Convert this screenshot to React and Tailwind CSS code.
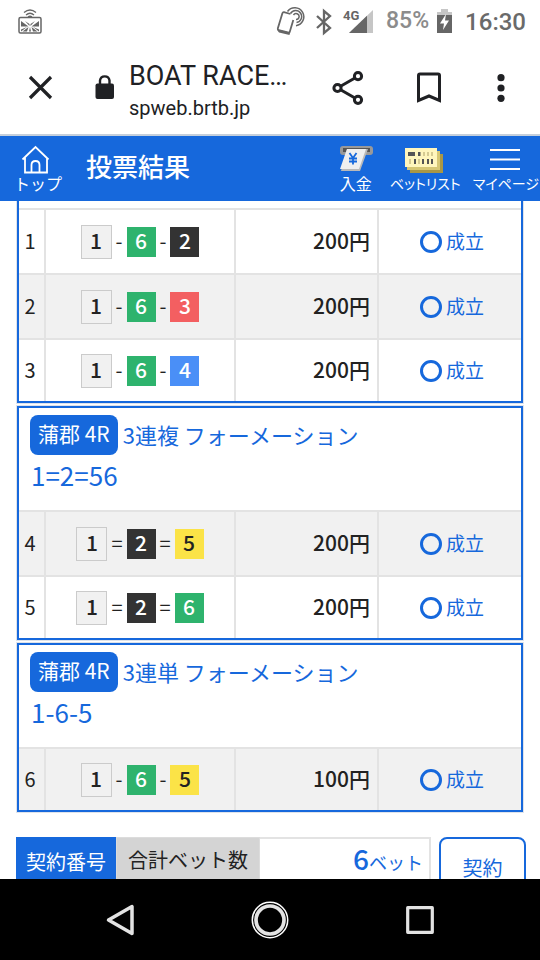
import React from "react";

const BOAT_COLORS = {
  1: "h-[34px] w-[31px] border border-[#cbcbcb] bg-[#f1f1f1] text-[#222]",
  2: "h-[30px] w-[29px] bg-[#333] text-white",
  3: "h-[30px] w-[29px] bg-[#f35f61] text-white",
  4: "h-[30px] w-[29px] bg-[#4a8ff7] text-white",
  5: "h-[30px] w-[29px] bg-[#fbe347] text-[#222]",
  6: "h-[30px] w-[29px] bg-[#2eb36d] text-white",
};

function Boat({ n }) {
  return (
    <span className={`flex items-center justify-center text-[21px] font-medium leading-none ${BOAT_COLORS[n]}`}>
      <span className="pb-[3px]">{n}</span>
    </span>
  );
}

function BetTable({ bets }) {
  return (
    <table className="w-full table-fixed border-separate border-spacing-0 text-[#222]">
      <colgroup>
        <col className="w-[27px]" />
        <col className="w-[190px]" />
        <col className="w-[143px]" />
        <col />
      </colgroup>
      <tbody>
        {bets.map((b, i) => {
          const cell = `border-t-2 border-[#e3e3e3] p-0 ${i === bets.length - 1 ? "h-[63px]" : "h-[65px]"} ${b.no % 2 === 0 ? "bg-[#f1f1f1]" : "bg-white"}`;
          return (
            <tr key={b.no}>
              <td className={`${cell} border-r-2 text-center text-[20px] leading-6`}>
                <div className="pb-0.5 pr-[3px]">{b.no}</div>
              </td>
              <td className={`${cell} border-r-2`}>
                <div className="flex items-center justify-center gap-1 text-[20px] leading-6">
                  <Boat n={b.boats[0]} />
                  <span className="pb-0.5">{b.sep}</span>
                  <Boat n={b.boats[1]} />
                  <span className="pb-0.5">{b.sep}</span>
                  <Boat n={b.boats[2]} />
                </div>
              </td>
              <td className={`${cell} border-r-2 text-right text-[21px] font-medium leading-6`}>
                <div className="pb-1 pr-[7px]">{b.amount}円</div>
              </td>
              <td className={cell}>
                <div className="flex items-center justify-center gap-1 pl-1 text-[19px] leading-6 text-[#1668dc]">
                  <span className="size-[22px] rounded-full border-3 border-[#1668dc]" />
                  <span className="pb-0.5">成立</span>
                </div>
              </td>
            </tr>
          );
        })}
      </tbody>
    </table>
  );
}

function RaceCard({ type, numbers, bets }) {
  return (
    <section className="border-2 border-[#1668dc] ring-1 ring-[#dfe3ea]">
      <header className="h-[102px] px-[11px] pt-[7px] text-[#1668dc]">
        <h2 className="flex items-center gap-[5px] text-[21px]">
          <span className="flex h-10 items-center rounded-lg bg-[#1668dc] px-2 pb-0.5 text-white">蒲郡 4R</span>
          <span className="pb-0.5 text-[22px]">{type} フォーメーション</span>
        </h2>
        <p className="pl-px text-[26px] leading-10">{numbers}</p>
      </header>
      <BetTable bets={bets} />
    </section>
  );
}

function StatusBar() {
  return (
    <div className="flex h-[43px] items-center justify-between pl-[18px] pr-[14px] font-['Roboto',sans-serif] font-medium">
      <svg width="24" height="28" viewBox="0 0 24 28" fill="none" stroke="#666">
        <path d="M6 4.500Q12-0.500 18 4.500M8 7Q12 3.500 16 7M10 9Q12 7.500 14 9" strokeWidth="1.300" />
        <rect x="1" y="9.500" width="22" height="15.500" rx="1.500" strokeWidth="1.500" />
        <path d="M3 13L10.500 18.500H3ZM7 13L11.500 16V18ZM21 13L13.500 18.500H21ZM17 13L12.500 16V18Z" fill="#666" stroke="none" />
        <path d="M3 23.500V21.500L9 19ZM4.500 23.500L10.500 19L9 23.500ZM21 23.500V21.500L15 19ZM19.500 23.500L13.500 19L15 23.500ZM11 23.500L12 19L13 23.500Z" fill="#666" stroke="none" />
      </svg>
      <div className="flex items-center">
        <svg width="98" height="30" viewBox="0 0 98 30" fill="none" stroke="#666">
          <path d="M14.500 7L8 5.200Q6.800 5 6.400 6.300L1.800 21.500Q1.500 23 2.800 23.500L12 26Q13.300 26.300 13.700 25L17.300 13" strokeWidth="1.800" />
          <path d="M2 22L14 25L13.500 28L3 25.500Q1.200 24.500 2 22Z" fill="#666" stroke="none" />
          <path d="M11.500 4.500A9 9 0 1 1 20 18.700M14.500 6.500A6 6 0 1 1 20.500 15.500M17.500 8A3 3 0 1 1 20 12.500" strokeWidth="1.500" />
          <path d="M41 9L54 21L48 26V4L54 9L41 21" strokeWidth="2.300" />
          <path d="M73 26L97 3V26Z" fill="#c6c6c6" stroke="none" />
          <path d="M73 26L91 8.700V26Z" fill="#666" stroke="none" />
          <text x="67" y="13" fontSize="13" fontWeight="700" fill="#666" stroke="none" fontFamily="Roboto">4G</text>
        </svg>
        <span className="pl-3 text-[23px] text-[#8c8c8c]">85%</span>
        <svg className="ml-[7px]" width="17" height="26" viewBox="0 0 17 26">
          <path d="M5 0H12V3H16V9H1V3H5Z" fill="#c6c6c6" />
          <path d="M1 6H16V24H1Z" fill="#666" />
          <path d="M10 5L4 14.500H8L7 21L13 11.500H9Z" fill="#fff" />
        </svg>
        <span className="pl-3 text-[24px] text-[#6a6a6a]">16:30</span>
      </div>
    </div>
  );
}

function BrowserBar() {
  return (
    <div className="flex h-[93px] items-center border-b-2 border-[#c5cfdb] pl-[22px] pr-[21px] font-['Roboto',sans-serif] text-[#202124]">
      <button aria-label="閉じる">
        <svg width="36" height="36" viewBox="0 0 36 36" stroke="currentColor" strokeWidth="3.200">
          <path d="M8 6L29 27M29 6L8 27" />
        </svg>
      </button>
      <svg className="ml-7 mr-2" width="36" height="36" viewBox="0 0 36 36">
        <rect x="9.500" y="12.500" width="18.500" height="15.500" rx="2" fill="currentColor" />
        <path d="M14 13V9.500A4.800 4.800 0 0 1 23.500 9.500V13" fill="none" stroke="currentColor" strokeWidth="2.400" />
      </svg>
      <div className="-ml-px min-w-0 flex-1 pt-1.5">
        <div className="text-[27px] leading-8">BOAT RACE…</div>
        <div className="text-[20px] leading-8">spweb.brtb.jp</div>
      </div>
      <div className="flex items-center gap-9">
        <button aria-label="共有" className="mr-2">
          <svg width="36" height="36" viewBox="0 0 36 36" fill="none" stroke="currentColor" strokeWidth="3">
            <path d="M6.500 17L27 5.200M6.500 17L27 28.800" />
            <g fill="#fff">
              <circle cx="6.500" cy="17" r="3.600" />
              <circle cx="27" cy="5.200" r="3.600" />
              <circle cx="27" cy="28.800" r="3.600" />
            </g>
          </svg>
        </button>
        <button aria-label="ブックマーク">
          <svg width="36" height="36" viewBox="0 0 36 36" fill="none" stroke="currentColor" strokeWidth="3">
            <path d="M7.500 4.500Q7.500 3 9 3H27Q28.500 3 28.500 4.500V29.500L18 25L7.500 29.500Z" />
          </svg>
        </button>
        <button aria-label="メニュー">
          <svg width="36" height="36" viewBox="0 0 36 36" fill="currentColor">
            <circle cx="18" cy="6.700" r="3.600" />
            <circle cx="18" cy="17" r="3.600" />
            <circle cx="18" cy="27.300" r="3.600" />
          </svg>
        </button>
      </div>
    </div>
  );
}

const navLink = "flex flex-col items-center whitespace-nowrap leading-4";

function SiteHeader() {
  return (
    <header className="flex h-[65px] items-start bg-[#1668dc] pl-[14px] pt-[3px] text-white">
      <a href="#top" className={`${navLink} text-[16px]`}>
        <svg width="38" height="36" viewBox="0 0 38 36" fill="none" stroke="#fff" strokeWidth="1.800">
          <path d="M3.500 20.500L16.500 8L29.500 20.500M6 18.500V33.500H28V18.500M12.500 33.500V26Q12.500 22 16.500 22Q20.500 22 20.500 26V33.500" />
        </svg>
        トップ
      </a>
      <h1 className="flex-1 pl-6 pt-1 text-[26px] font-medium leading-[46px]">投票結果</h1>
      <nav className="flex">
        <a href="#deposit" className={`${navLink} mr-4 text-[16px]`}>
          <svg width="36" height="36" viewBox="0 0 36 36">
            <rect x="2" y="7" width="33" height="9" rx="3" fill="#999" />
            <rect x="5" y="9" width="27" height="4" fill="#555" />
            <path d="M9 10H30L22 32H3Z" fill="#b9b9b9" />
            <path d="M9 10H28L21 30H2Z" fill="#efefef" />
            <path d="M11.500 14L15 19L18.500 14M15 19V25.500M11 19.500H19M11 22.500H19" stroke="#1668dc" strokeWidth="1.800" fill="none" />
          </svg>
          入金
        </a>
        <a href="#betlist" className={`${navLink} mr-3 text-[14px] [font-feature-settings:'palt']`}>
          <svg width="40" height="36" viewBox="0 0 40 36">
            <path d="M5 15H38V34H5Z" fill="#a99745" />
            <path d="M2 12H35V31H2Z" fill="#d6c775" />
            <path d="M0 9H32V28H0Z" fill="#fff6bd" />
            <path d="M3 13H10V17H3ZM13 13H15.500V17H13ZM9 20H11V25H9ZM17 20H19V25H17ZM22 20H24V25H22ZM26 20H28V25H26Z" fill="#555" />
            <path d="M18 13H20V17H18ZM22 13H24V17H22ZM26 13H28V17H26ZM4 20H6V25H4ZM13 20H15V25H13Z" fill="#d6cb92" />
          </svg>
          ベットリスト
        </a>
        <a href="#mypage" className={`${navLink} mr-px text-[14px] [font-feature-settings:'palt']`}>
          <svg width="32" height="36" viewBox="0 0 32 36" stroke="#fff" strokeWidth="2">
            <path d="M0 11H30M0 20.500H30M0 30H30" />
          </svg>
          マイページ
        </a>
      </nav>
    </header>
  );
}

function Summary() {
  return (
    <section className="mt-[25px] flex h-[62px] text-[20px] leading-7">
      <div className="-ml-px bg-[#1668dc] px-[10px] pt-[11px] text-white">契約番号</div>
      <div className="border border-[#dcdcdc] bg-[#d4d4d4] px-[11px] pt-2 text-[#222]">合計ベット数</div>
      <div className="flex flex-1 items-baseline justify-end border-2 border-l-0 border-[#e3e3e3] pr-[6px] pt-[5px] text-[18px] text-[#1668dc]">
        <strong className="text-[28px] font-medium">6</strong>ベット
      </div>
      <button className="-mr-[3px] ml-2 w-[87px] rounded-lg border-2 border-[#1668dc] bg-white leading-5 text-[#1668dc]">契約</button>
    </section>
  );
}

function SystemNav() {
  return (
    <nav className="flex h-[81px] shrink-0 items-center justify-center gap-[110px] bg-black">
      <button aria-label="戻る">
        <svg width="40" height="40" viewBox="0 0 40 40" fill="none" stroke="#e3e3e3" strokeWidth="3.500" strokeLinejoin="round">
          <path d="M32 6.500V33.500L8.500 20Z" />
        </svg>
      </button>
      <button aria-label="ホーム">
        <svg width="40" height="40" viewBox="0 0 40 40" fill="none" stroke="#fff">
          <circle cx="20" cy="20" r="17.700" strokeWidth="1.500" />
          <circle cx="20" cy="20" r="14" strokeWidth="3.700" stroke="#e3e3e3" />
        </svg>
      </button>
      <button aria-label="履歴">
        <svg width="40" height="40" viewBox="0 0 40 40" fill="none" stroke="#e3e3e3" strokeWidth="3.200" strokeLinejoin="round">
          <rect x="7.700" y="7.700" width="24.600" height="24.600" />
        </svg>
      </button>
    </nav>
  );
}

export default function App() {
  return (
    <div className="flex h-screen flex-col bg-white font-['Noto_Sans_CJK_JP',sans-serif]">
      <StatusBar />
      <BrowserBar />
      <SiteHeader />
      <main className="min-h-0 flex-1 overflow-hidden pl-[17px] pr-[17px]">
        <div className="flex flex-col gap-[3px]">
          <section className="border-2 border-t-0 border-[#1668dc] pt-[7px] ring-1 ring-[#dfe3ea]">
            <BetTable
              bets={[
                { no: 1, boats: [1, 6, 2], sep: "-", amount: 200 },
                { no: 2, boats: [1, 6, 3], sep: "-", amount: 200 },
                { no: 3, boats: [1, 6, 4], sep: "-", amount: 200 },
              ]}
            />
          </section>
          <RaceCard
            type="3連複"
            numbers="1=2=56"
            bets={[
              { no: 4, boats: [1, 2, 5], sep: "=", amount: 200 },
              { no: 5, boats: [1, 2, 6], sep: "=", amount: 200 },
            ]}
          />
          <RaceCard type="3連単" numbers="1-6-5" bets={[{ no: 6, boats: [1, 6, 5], sep: "-", amount: 100 }]} />
        </div>
        <Summary />
      </main>
      <SystemNav />
    </div>
  );
}
